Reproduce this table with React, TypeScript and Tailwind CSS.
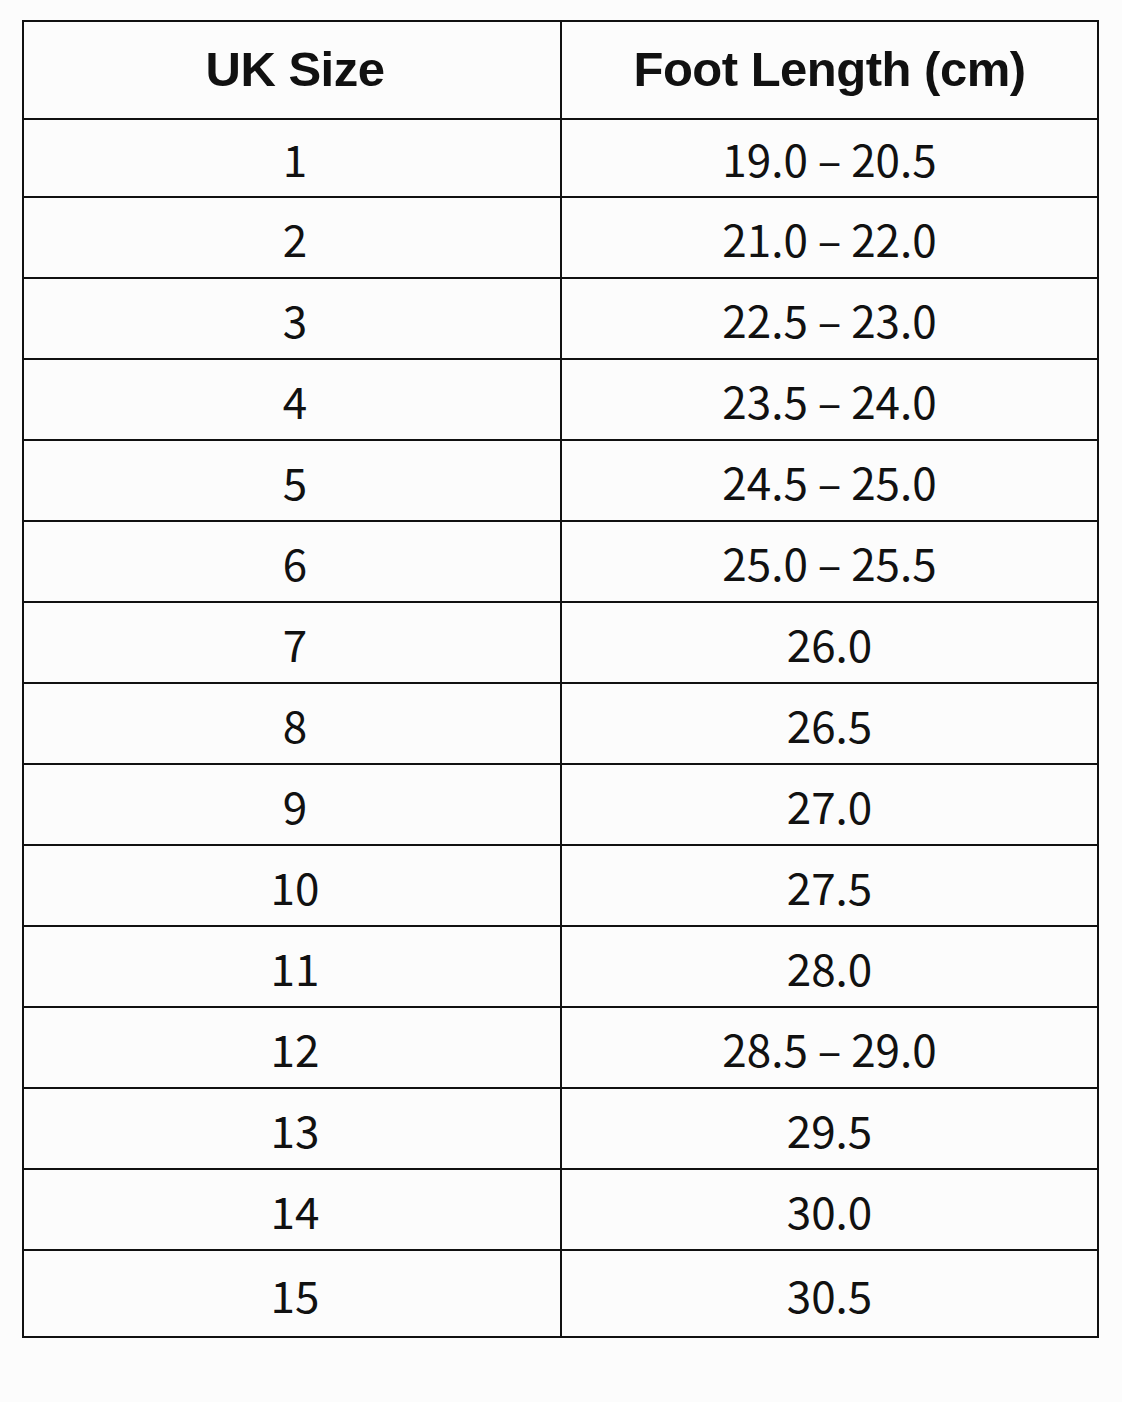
const rows: [string, string][] = [
  ['1', '19.0 – 20.5'],
  ['2', '21.0 – 22.0'],
  ['3', '22.5 – 23.0'],
  ['4', '23.5 – 24.0'],
  ['5', '24.5 – 25.0'],
  ['6', '25.0 – 25.5'],
  ['7', '26.0'],
  ['8', '26.5'],
  ['9', '27.0'],
  ['10', '27.5'],
  ['11', '28.0'],
  ['12', '28.5 – 29.0'],
  ['13', '29.5'],
  ['14', '30.0'],
  ['15', '30.5'],
]

const App = () => {
  return (
    <div className="min-h-[1402px] w-[1122px] bg-[#fcfcfc] pt-[20px] pl-[22px]">
      <div className="w-[1077px] border-2 border-[#111]">
        {/* Header */}
        <div className="grid h-[96px] grid-cols-[538px_1fr] font-['Liberation_Sans',sans-serif] text-[49px] font-bold tracking-[-0.5px] text-[#111]">
          <div className="flex items-center justify-center border-r-2 border-[#111] pl-[6px]">UK Size</div>
          <div className="flex items-center justify-center">Foot Length (cm)</div>
        </div>

        {/* Rows */}
        {rows.map(([size, length], i) => (
          <div
            key={size}
            className={`grid grid-cols-[538px_1fr] border-t-2 border-[#111] font-['Noto_Sans_CJK_JP','Noto_Sans',sans-serif] text-[44px] text-[#111] ${
              i === 0 ? 'h-[78px]' : i === rows.length - 1 ? 'h-[87px]' : 'h-[81px]'
            }`}
          >
            <div className="flex items-center justify-center border-r-2 border-[#111] pl-[6px]">{size}</div>
            <div className="flex items-center justify-center">{length}</div>
          </div>
        ))}
      </div>
    </div>
  )
}

export default App
